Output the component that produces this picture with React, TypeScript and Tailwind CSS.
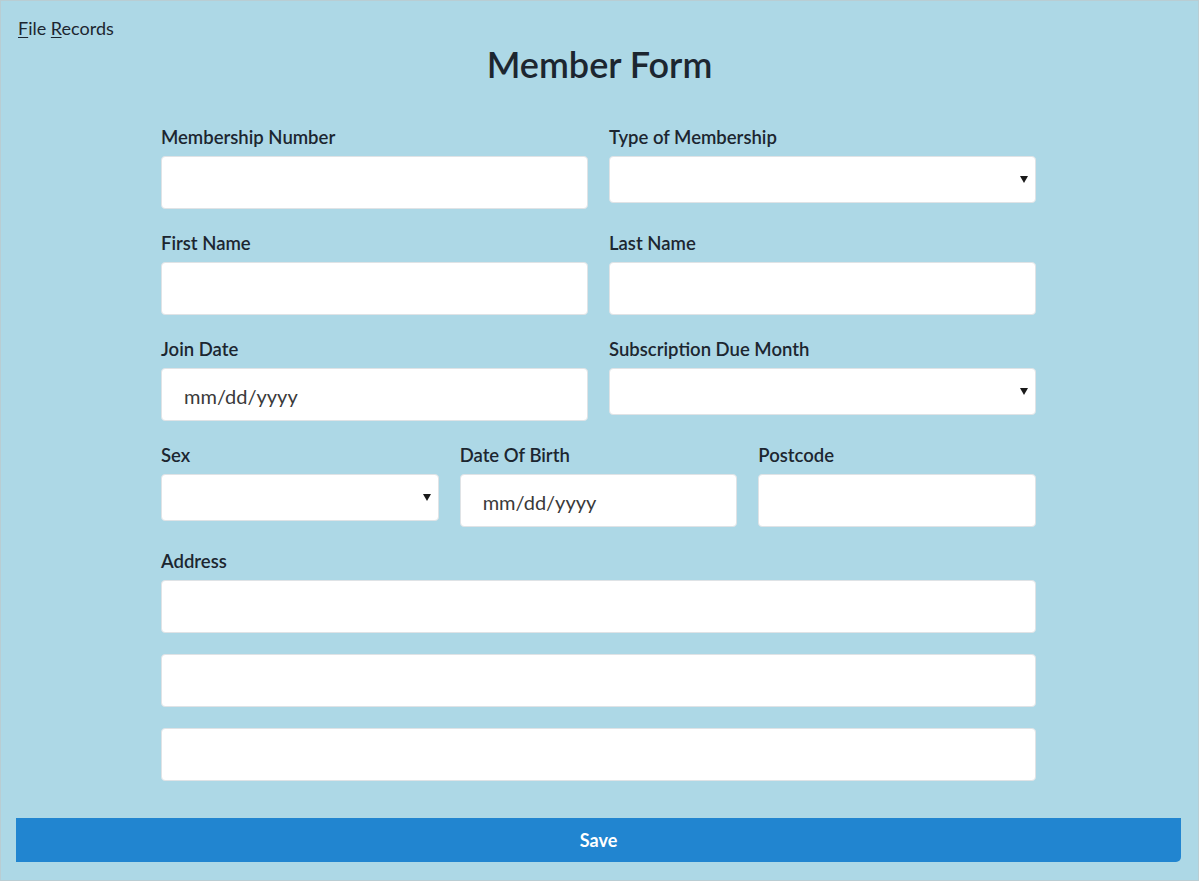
import { ReactNode } from "react";

const font = { fontFamily: "Lato, 'Open Sans', sans-serif" };

function Field({ label, children }: { label: string; children: ReactNode }) {
  return (
    <div className="flex flex-col">
      <label className="text-[18.5px] leading-[22px] font-semibold text-[#1c2630] mb-2">{label}</label>
      {children}
    </div>
  );
}

function TextBox() {
  return (
    <input
      type="text"
      className="h-[53px] w-full rounded-[4px] border border-[#dfe3e6] bg-white px-[22px] text-[19px] outline-none"
    />
  );
}

function DateBox() {
  return (
    <input
      type="text"
      placeholder="mm/dd/yyyy"
      className="h-[53px] w-full rounded-[4px] border border-[#dfe3e6] bg-white px-[22px] pt-[2px] text-[20px] text-[#333] placeholder:text-[#3a3a3a] outline-none"
    />
  );
}

function SelectBox() {
  return (
    <div className="relative">
      <select className="h-[47px] w-full appearance-none rounded-[4px] border border-[#dfe3e6] bg-white px-3 text-[18px] outline-none">
        <option></option>
      </select>
      <svg
        className="pointer-events-none absolute right-[8px] top-[20px]"
        width="8"
        height="7"
        viewBox="0 0 8 7"
      >
        <path d="M0 0 H8 L4 7 Z" fill="#1a1a1a" />
      </svg>
    </div>
  );
}

export default function App() {
  return (
    <div
      className="h-[881px] bg-[#add8e6] border border-[#b9cdd3] flex flex-col text-[#1c2630]"
      style={font}
    >
      <div className="pt-[16px] pl-[17px] text-[18px] leading-[22px]">
        <span className="underline underline-offset-2">F</span>ile{" "}
        <span className="underline underline-offset-2">R</span>ecords
      </div>

      <h1 className="mt-[3px] text-center text-[36px] leading-[44px] font-semibold">Member Form</h1>

      <div className="ml-[160px] mt-[40px] w-[875px] flex flex-col gap-[23px]">
        <div className="grid grid-cols-2 gap-x-[21px]">
          <Field label="Membership Number">
            <TextBox />
          </Field>
          <Field label="Type of Membership">
            <SelectBox />
          </Field>
        </div>
        <div className="grid grid-cols-2 gap-x-[21px]">
          <Field label="First Name">
            <TextBox />
          </Field>
          <Field label="Last Name">
            <TextBox />
          </Field>
        </div>
        <div className="grid grid-cols-2 gap-x-[21px]">
          <Field label="Join Date">
            <DateBox />
          </Field>
          <Field label="Subscription Due Month">
            <SelectBox />
          </Field>
        </div>
        <div className="grid grid-cols-3 gap-x-[21px]">
          <Field label="Sex">
            <SelectBox />
          </Field>
          <Field label="Date Of Birth">
            <DateBox />
          </Field>
          <Field label="Postcode">
            <TextBox />
          </Field>
        </div>
        <Field label="Address">
          <div className="flex flex-col gap-[21px]">
            <TextBox />
            <TextBox />
            <TextBox />
          </div>
        </Field>
      </div>

      <button className="mt-auto mb-[18px] ml-[15px] mr-[17px] h-[44px] bg-[#2185d0] rounded-br-[5px] text-white text-[18px] font-bold">
        Save
      </button>
    </div>
  );
}
